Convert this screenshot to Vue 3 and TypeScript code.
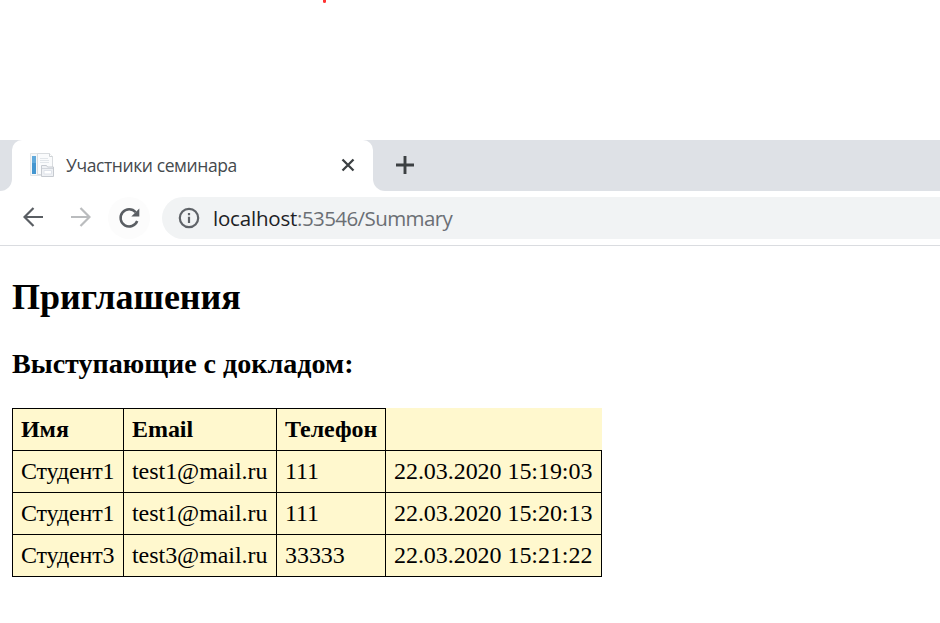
<script setup lang="ts">
interface Speaker {
  name: string
  email: string
  phone: string
  registered: string
}

const headings: string[] = ['Имя', 'Email', 'Телефон']
const speakers: Speaker[] = [
  { name: 'Студент1', email: 'test1@mail.ru', phone: '111', registered: '22.03.2020 15:19:03' },
  { name: 'Студент1', email: 'test1@mail.ru', phone: '111', registered: '22.03.2020 15:20:13' },
  { name: 'Студент3', email: 'test3@mail.ru', phone: '33333', registered: '22.03.2020 15:21:22' },
]
</script>

<template>
  <div class="screen">
    <div class="top-space"><span class="red-dot"></span></div>

    <header class="tab-strip">
      <div class="strip-left"></div>
      <div class="tab">
        <svg class="favicon" width="26" height="26" viewBox="0 0 26 26">
          <path d="M1.500 1.500h14v22h-14z" fill="#f6f8f9" stroke="#e3e6e8" />
          <path d="M3 4h4v18H3z" fill="#4496d0" />
          <path d="M3 4h4v7H3z" fill="#62aadb" />
          <path d="M8.500 1.500h12l3 3v18h-15z" fill="#fafbfc" stroke="#d9dcdf" />
          <path d="M20.500 1.500v3h3" fill="#fff" stroke="#cfd3d6" />
          <path d="M11 6.500h8M11 8.500h9M11 10.500h9" stroke="#e2e6ea" />
          <path d="M12.500 13.500h5l1 1.500h6v9.500h-12z" fill="#eff1f4" stroke="#c6cad0" />
          <path d="M13 16.500h11" stroke="#d2d6dc" />
          <path d="M15 18.500h7.500v3.500H15z" fill="#fff" stroke="#dfe3ea" />
        </svg>
        <span class="tab-title">Участники семинара</span>
        <svg class="close" width="14" height="14" viewBox="0 0 14 14">
          <path d="M1.500 1.500l11 11M12.500 1.500l-11 11" stroke="#3c4043" stroke-width="2.300" />
        </svg>
      </div>
      <div class="strip-right">
        <svg width="18" height="18" viewBox="0 0 18 18">
          <path d="M9 0v18M0 9h18" stroke="#3c4043" stroke-width="2.900" />
        </svg>
      </div>
    </header>

    <nav class="toolbar">
      <svg class="back" width="20" height="20" viewBox="0 0 20 20" fill="none" stroke="#5a5e63" stroke-width="2.200">
        <path d="M20 10H1.500M10.500 1L1.500 10l9 9" />
      </svg>
      <svg class="forward" width="20" height="20" viewBox="0 0 20 20" fill="none" stroke="#babcbe" stroke-width="2.200">
        <path d="M0 10h18.500M9.500 1l9 9-9 9" />
      </svg>
      <div class="reload">
        <svg width="22" height="22" viewBox="0 0 22 22">
          <path d="M17.700 5.300A8.600 8.600 0 1 0 19.200 14" fill="none" stroke="#5a5e63" stroke-width="2.500" />
          <path d="M21.300 1.500V9.500h-8z" fill="#5a5e63" />
        </svg>
      </div>
      <div class="address">
        <svg width="22" height="22" viewBox="0 0 22 22">
          <circle cx="11" cy="11" r="9.200" fill="none" stroke="#5f6368" stroke-width="2.200" />
          <path d="M9.900 9.800h2.200V16H9.900zM9.900 6h2.200v2.200H9.900z" fill="#5f6368" />
        </svg>
        <span class="url"><span class="host">localhost</span>:53546/Summary</span>
      </div>
    </nav>

    <main class="page">
      <h2>Приглашения</h2>
      <h3>Выступающие с докладом:</h3>
      <table>
        <colgroup>
          <col class="col-name" />
          <col class="col-email" />
          <col class="col-phone" />
          <col class="col-date" />
        </colgroup>
        <thead>
          <tr>
            <th v-for="heading in headings" :key="heading">{{ heading }}</th>
            <td class="blank"></td>
          </tr>
        </thead>
        <tbody>
          <tr v-for="speaker in speakers" :key="speaker.registered">
            <td>{{ speaker.name }}</td>
            <td>{{ speaker.email }}</td>
            <td>{{ speaker.phone }}</td>
            <td>{{ speaker.registered }}</td>
          </tr>
        </tbody>
      </table>
    </main>
  </div>
</template>

<style>
body {
  margin: 0;
  background: #fff;
}
</style>

<style scoped>
.screen {
  width: 940px;
  height: 623px;
  overflow: hidden;
  background: #fff;
  box-sizing: border-box;
}
.top-space {
  height: 140px;
  padding-left: 323px;
  box-sizing: border-box;
}
.red-dot {
  display: block;
  width: 3px;
  height: 3px;
  border-radius: 0 0 2px 2px;
  background: #f33;
}
.tab-strip {
  display: flex;
  height: 51px;
  background: linear-gradient(#dee1e6 0 25px, #fff 25px);
}
.strip-left {
  width: 12px;
  background: #dee1e6;
  border-bottom-right-radius: 12px;
}
.tab {
  display: flex;
  align-items: center;
  width: 361px;
  box-sizing: border-box;
  padding: 0 0 1px 17px;
  background: #fff;
  border-radius: 10px 10px 0 0;
  font-family: "Open Sans", "Noto Sans", sans-serif;
}
.favicon {
  flex: none;
}
.tab-title {
  width: 275px;
  padding-left: 11px;
  box-sizing: border-box;
  font-size: 17.500px;
  letter-spacing: -0.400px;
  line-height: 24px;
  color: #45494d;
  white-space: nowrap;
}
.close {
  flex: none;
  margin-left: 11px;
}
.strip-right {
  flex: 1;
  display: flex;
  align-items: center;
  padding: 0 0 1px 23px;
  background: #dee1e6;
  border-bottom-left-radius: 12px;
}
.toolbar {
  display: flex;
  align-items: center;
  height: 55px;
  box-sizing: border-box;
  padding: 0 0 1px 23px;
  border-bottom: 1px solid #dadce0;
}
.toolbar > svg,
.address > svg {
  flex: none;
}
.back,
.forward {
  margin-bottom: 1px;
}
.forward {
  margin-left: 28px;
}
.reload {
  display: flex;
  align-items: center;
  justify-content: center;
  width: 42px;
  height: 42px;
  margin-left: 17px;
  border-radius: 50%;
  background: #fcfcfc;
}
.address {
  display: flex;
  flex: 1;
  align-items: center;
  height: 42px;
  margin-left: 12px;
  padding-left: 16px;
  box-sizing: border-box;
  border-radius: 21px 0 0 21px;
  background: #f1f3f4;
}
.url {
  margin-left: 13px;
  font-family: "Open Sans", "Noto Sans", sans-serif;
  font-size: 20.500px;
  letter-spacing: -0.580px;
  line-height: 30px;
  white-space: nowrap;
  color: #6b6f74;
}
.host {
  letter-spacing: -0.200px;
  color: #202124;
}
.page {
  padding: 30px 12px 0;
  color: #000;
  font-family: "Liberation Serif", "Times New Roman", serif;
}
h2 {
  margin: 0;
  font-size: 36px;
  line-height: 42px;
}
h3 {
  margin: 29px 0 27px;
  font-size: 28.080px;
  line-height: 34px;
}
table {
  width: 590px;
  table-layout: fixed;
  border-collapse: collapse;
  background: #fff8ce;
  font-size: 24px;
  line-height: 27px;
}
.col-name {
  width: 111px;
}
.col-email {
  width: 153px;
}
.col-phone {
  width: 109px;
}
.col-date {
  width: 216px;
}
tr {
  height: 42px;
}
th,
td {
  box-sizing: border-box;
  padding: 7px 0 7px 8px;
  border: 1px solid #000;
  text-align: left;
  letter-spacing: -0.050px;
  white-space: nowrap;
}
td:first-child {
  letter-spacing: -0.150px;
}
.blank {
  border-top: 0;
  border-right: 0;
}
</style>
